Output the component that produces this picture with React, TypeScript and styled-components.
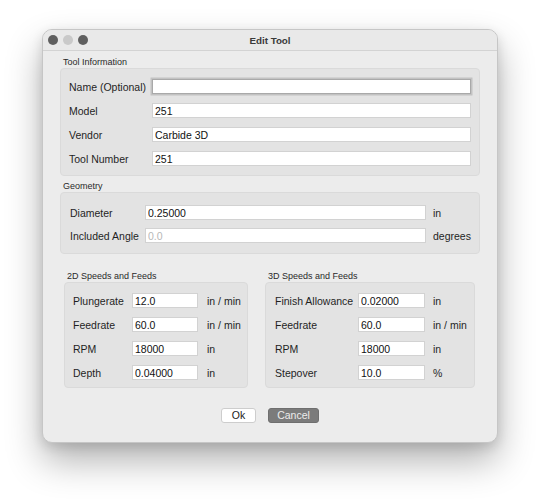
import React from "react";
import styled, { createGlobalStyle } from "styled-components";

const GlobalStyle = createGlobalStyle`
  html, body { margin: 0; padding: 0; background: #ffffff; }
  body { font-family: "Liberation Sans", Arial, sans-serif; color: #222; }
  * { box-sizing: border-box; }
`;

const Page = styled.div`
  padding: 29px 0 57px 42px;
  min-height: 500px;
`;

const Window = styled.div`
  width: 456px;
  height: 414px;
  background: #ececec;
  border: 1px solid #c6c6c6;
  border-radius: 10px;
  box-shadow: 0 18px 36px rgba(0, 0, 0, 0.3), 0 4px 12px rgba(0, 0, 0, 0.12);
  display: flex;
  flex-direction: column;
  overflow: hidden;
`;

const TitleBar = styled.div`
  height: 21px;
  border-bottom: 1px solid #d3d3d3;
  background: #e9e9e9;
  display: grid;
  grid-template-columns: 1fr auto 1fr;
  align-items: center;
`;

const Lights = styled.div`
  display: flex;
  gap: 5px;
  padding-left: 5px;
`;

const Light = styled.span<{ $c: string }>`
  width: 10px;
  height: 10px;
  border-radius: 50%;
  background: ${(p) => p.$c};
`;

const Title = styled.div`
  font-size: 9.8px;
  font-weight: bold;
  color: #3a3a3a;
`;

const Content = styled.div`
  padding: 5px 17px 0 17px;
  display: flex;
  flex-direction: column;
`;

const SectionTitle = styled.div<{ $mt?: number }>`
  height: 12px;
  line-height: 12px;
  font-size: 9px;
  color: #2a2a2a;
  padding-left: 3px;
  margin-top: ${(p) => p.$mt ?? 0}px;
`;

const GroupBox = styled.div<{ $pad: string }>`
  background: #e3e3e3;
  border: 1px solid #dadada;
  border-radius: 4px;
  padding: ${(p) => p.$pad};
`;

const Grid = styled.div<{ $cols: string; $rowGap: number }>`
  display: grid;
  grid-template-columns: ${(p) => p.$cols};
  grid-auto-rows: 15px;
  row-gap: ${(p) => p.$rowGap}px;
  align-items: center;
`;

const Label = styled.span`
  font-size: 10.5px;
  color: #1f1f1f;
  white-space: nowrap;
`;

const Unit = styled.span<{ $pl: number }>`
  font-size: 10.5px;
  color: #1f1f1f;
  white-space: nowrap;
  padding-left: ${(p) => p.$pl}px;
`;

const Field = styled.input<{ $focus?: boolean }>`
  height: 15px;
  width: 100%;
  border: 1px solid ${(p) => (p.$focus ? "#a9a9a9" : "#d2d2d2")};
  box-shadow: ${(p) => (p.$focus ? "0 0 0 1.5px #c2c2c2" : "none")};
  background: #ffffff;
  font-family: "Liberation Sans", Arial, sans-serif;
  font-size: 10.5px;
  color: #111;
  padding: 0 2px;
  margin: 0;
  outline: none;
  &:disabled {
    color: #b8b8b8;
    background: #ffffff;
  }
`;

const Columns = styled.div`
  display: grid;
  grid-template-columns: 184px 210px;
  column-gap: 17px;
  padding-left: 4px;
  margin-top: 16px;
`;

const Column = styled.div`
  display: flex;
  flex-direction: column;
`;

const Buttons = styled.div`
  display: flex;
  justify-content: center;
  gap: 12px;
  margin-top: 20px;
`;

const Button = styled.button<{ $primary?: boolean; $w: number }>`
  width: ${(p) => p.$w}px;
  height: 15px;
  border-radius: 3px;
  border: 1px solid ${(p) => (p.$primary ? "#6f6f6f" : "#cdcdcd")};
  background: ${(p) => (p.$primary ? "#7b7b7b" : "#ffffff")};
  color: ${(p) => (p.$primary ? "#ececec" : "#1a1a1a")};
  font-family: "Liberation Sans", Arial, sans-serif;
  font-size: 10.5px;
  padding: 0;
  line-height: 13px;
`;

type Row = { label: string; value: string; unit?: string; disabled?: boolean; focus?: boolean };

const toolInfo: Row[] = [
  { label: "Name (Optional)", value: "", focus: true },
  { label: "Model", value: "251" },
  { label: "Vendor", value: "Carbide 3D" },
  { label: "Tool Number", value: "251" },
];

const geometry: Row[] = [
  { label: "Diameter", value: "0.25000", unit: "in" },
  { label: "Included Angle", value: "0.0", unit: "degrees", disabled: true },
];

const feeds2d: Row[] = [
  { label: "Plungerate", value: "12.0", unit: "in / min" },
  { label: "Feedrate", value: "60.0", unit: "in / min" },
  { label: "RPM", value: "18000", unit: "in" },
  { label: "Depth", value: "0.04000", unit: "in" },
];

const feeds3d: Row[] = [
  { label: "Finish Allowance", value: "0.02000", unit: "in" },
  { label: "Feedrate", value: "60.0", unit: "in / min" },
  { label: "RPM", value: "18000", unit: "in" },
  { label: "Stepover", value: "10.0", unit: "%" },
];

function Rows({ rows, unitPad }: { rows: Row[]; unitPad: number }) {
  return (
    <>
      {rows.map((r) => (
        <React.Fragment key={r.label}>
          <Label>{r.label}</Label>
          <Field
            defaultValue={r.value}
            disabled={r.disabled}
            $focus={r.focus}
          />
          {r.unit !== undefined && <Unit $pl={unitPad}>{r.unit}</Unit>}
        </React.Fragment>
      ))}
    </>
  );
}

export default function App() {
  return (
    <>
      <GlobalStyle />
      <Page>
        <Window>
          <TitleBar>
            <Lights>
              <Light $c="#5f5f5f" />
              <Light $c="#c9c9c9" />
              <Light $c="#5f5f5f" />
            </Lights>
            <Title>Edit Tool</Title>
            <div />
          </TitleBar>
          <Content>
            <SectionTitle>Tool Information</SectionTitle>
            <GroupBox $pad="10px 8px 9px 8px">
              <Grid $cols="83px 319px" $rowGap={9}>
                <Rows rows={toolInfo} unitPad={0} />
              </Grid>
            </GroupBox>

            <SectionTitle $mt={4}>Geometry</SectionTitle>
            <GroupBox $pad="12px 8px 10px 9px">
              <Grid $cols="75px 281px auto" $rowGap={8}>
                <Rows rows={geometry} unitPad={7} />
              </Grid>
            </GroupBox>

            <Columns>
              <Column>
                <SectionTitle>2D Speeds and Feeds</SectionTitle>
                <GroupBox $pad="10px 6px 7px 8px">
                  <Grid $cols="59px 66px auto" $rowGap={9}>
                    <Rows rows={feeds2d} unitPad={9} />
                  </Grid>
                </GroupBox>
              </Column>
              <Column>
                <SectionTitle>3D Speeds and Feeds</SectionTitle>
                <GroupBox $pad="10px 6px 7px 9px">
                  <Grid $cols="83px 67px auto" $rowGap={9}>
                    <Rows rows={feeds3d} unitPad={8} />
                  </Grid>
                </GroupBox>
              </Column>
            </Columns>

            <Buttons>
              <Button $w={35}>Ok</Button>
              <Button $w={51} $primary>
                Cancel
              </Button>
            </Buttons>
          </Content>
        </Window>
      </Page>
    </>
  );
}
